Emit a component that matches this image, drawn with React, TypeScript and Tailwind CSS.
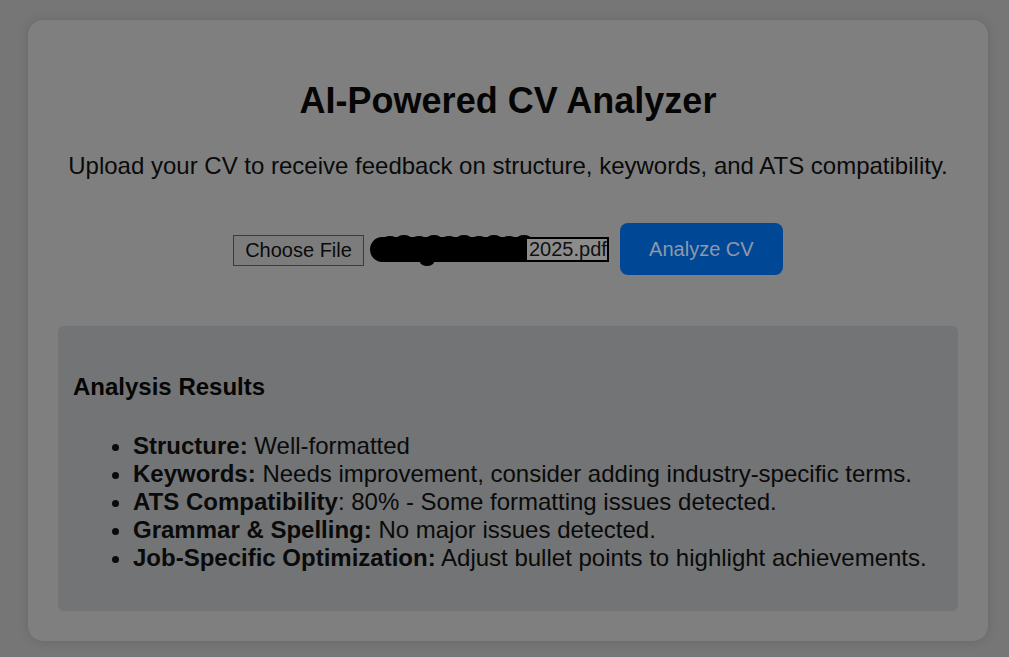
import React from "react";

const items: { label: string; text: string; colonBold: boolean }[] = [
  { label: "Structure", text: "Well-formatted", colonBold: true },
  { label: "Keywords", text: "Needs improvement, consider adding industry-specific terms.", colonBold: true },
  { label: "ATS Compatibility", text: "80% - Some formatting issues detected.", colonBold: false },
  { label: "Grammar & Spelling", text: "No major issues detected.", colonBold: true },
  { label: "Job-Specific Optimization", text: "Adjust bullet points to highlight achievements.", colonBold: true },
];

function Redaction() {
  // black marker scribble over the file name, drawn as a picture
  const bumps = [14, 28, 43, 58, 73, 88, 103, 118, 133, 148];
  return (
    <svg className="absolute inset-0" width="241" height="33" viewBox="0 0 241 33">
      <rect x="13" y="4" width="228" height="25" fill="#000" />
      <ellipse cx="14" cy="16.5" rx="12" ry="12.5" fill="#000" />
      {bumps.map((x, i) => (
        <ellipse key={x} cx={x + 8} cy={i % 2 ? 7 : 8} rx="8" ry="5" fill="#000" />
      ))}
      <ellipse cx="59" cy="29" rx="7" ry="4" fill="#000" />
    </svg>
  );
}

export default function App() {
  return (
    <div
      className="w-[1009px] h-[657px] bg-[#767676] pt-[20px] pl-[28px] overflow-hidden text-black"
      style={{ fontFamily: '"Liberation Sans", Arial, sans-serif' }}
    >
      <div className="w-[960px] bg-[#7f7f7f] rounded-[15px] shadow-[0_0_12px_rgba(0,0,0,0.12)] h-[621px] px-[30px] pt-[60px] flex flex-col items-center">
        <h1 className="text-[36px] font-bold leading-[41px] text-[#050505]">AI-Powered CV Analyzer</h1>
        <p className="text-[24px] leading-[28px] mt-[31px] text-[#0a0a0a]">
          Upload your CV to receive feedback on structure, keywords, and ATS compatibility.
        </p>
        <div className="flex items-center mt-[43px]">
          <button className="h-[31px] px-[11px] border border-[#3c3c3c] bg-[#7c7c7c] text-[20px] leading-[23px] text-[#0a0a0a] mt-[2px]">
            Choose File
          </button>
          <div className="relative ml-[4px] w-[241px] h-[33px] flex justify-end items-center mt-[1px]">
            <Redaction />
            <span className="relative bg-[#8c8c8c] text-[20px] leading-[21px] mr-[2px] pl-[2px] text-[#111] h-[21px] overflow-hidden">
              2025.pdf
            </span>
          </div>
          <button
            className="ml-[11px] h-[52px] w-[163px] rounded-[8px] text-[20px] text-[#8e98a8]"
            style={{ backgroundColor: "#004896" }}
          >
            Analyze CV
          </button>
        </div>
        <div className="self-stretch mt-[51px] bg-[#737475] rounded-[6px] px-[15px] pt-[47px] pb-[39px]">
          <h3 className="text-[24px] font-bold leading-[28px] text-[#050505]">Analysis Results</h3>
          <ul className="list-disc pl-[60px] mt-[31px] text-[24px] leading-[28px] text-[#0a0a0a]">
            {items.map((it) => (
              <li key={it.label}>
                {it.colonBold ? (
                  <b>{it.label}:</b>
                ) : (
                  <>
                    <b>{it.label}</b>:
                  </>
                )}{" "}
                {it.text}
              </li>
            ))}
          </ul>
        </div>
      </div>
    </div>
  );
}
